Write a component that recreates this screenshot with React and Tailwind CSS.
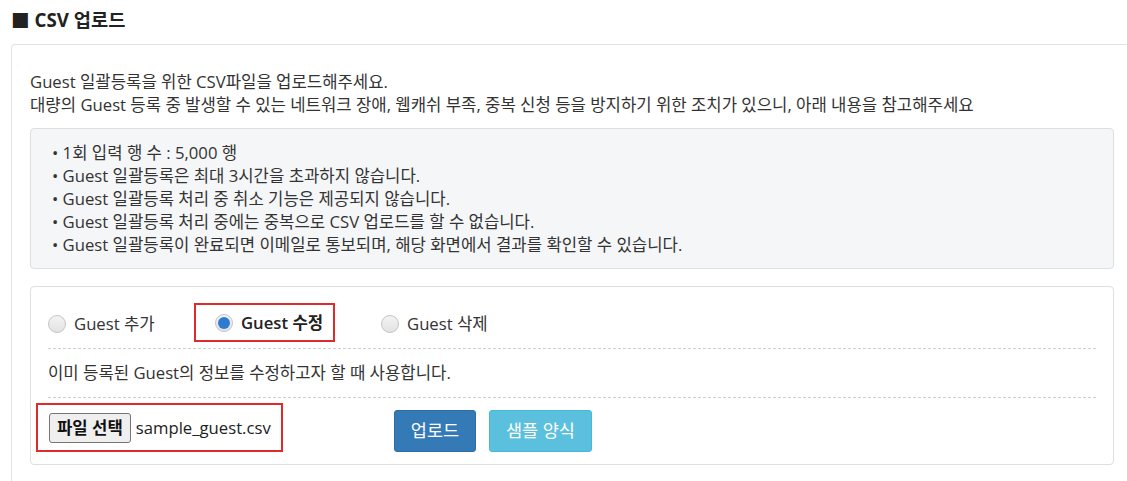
export default function App() {
  const notes = [
    "1회 입력 행 수 : 5,000 행",
    "Guest 일괄등록은 최대 3시간을 초과하지 않습니다.",
    "Guest 일괄등록 처리 중 취소 기능은 제공되지 않습니다.",
    "Guest 일괄등록 처리 중에는 중복으로 CSV 업로드를 할 수 없습니다.",
    "Guest 일괄등록이 완료되면 이메일로 통보되며, 해당 화면에서 결과를 확인할 수 있습니다.",
  ]

  const Radio = ({ checked }) => (
    <span className="w-[18px] h-[18px] shrink-0 rounded-full border border-[#c4c4c4] bg-gradient-to-b from-[#f4f4f4] to-[#e2e2e2] flex items-center justify-center">
      {checked && <span className="w-[12px] h-[12px] rounded-full bg-[#2f7bd1]" />}
    </span>
  )

  return (
    <div className="w-[1127px] h-[481px] bg-white text-[#333] overflow-hidden" style={{ fontFamily: '"Open Sans", "Noto Sans CJK KR", sans-serif' }}>
      {/* title */}
      <div className="h-[44px] pl-[11px] pt-[6px] text-[18.7px] font-bold text-[#222] leading-[28px]">■ CSV 업로드</div>

      {/* outer panel */}
      <div className="ml-[11px] border-l border-t border-[#e3e3e3] rounded-tl-[4px] pl-[18px] pr-[13px] pt-[25px] h-[437px]">
        <p className="text-[16.7px] leading-[23px]">Guest 일괄등록을 위한 CSV파일을 업로드해주세요.</p>
        <p className="text-[16.7px] leading-[23px]">대량의 Guest 등록 중 발생할 수 있는 네트워크 장애, 웹캐쉬 부족, 중복 신청 등을 방지하기 위한 조치가 있으니, 아래 내용을 참고해주세요</p>

        <div className="mt-[12px] h-[141px] bg-[#f5f6f8] border border-[#dedee3] rounded-[4px] pl-[21px] pt-[12px]">
          {notes.map((n) => (
            <div key={n} className="text-[16.7px] leading-[23px]">• {n}</div>
          ))}
        </div>

        <div className="mt-[17px] h-[179px] border border-[#dedee3] rounded-[4px] px-[17px]">
          <div className="h-[61px] pt-[13px] flex items-center">
            <label className="flex items-center gap-[8px] text-[16.7px] w-[146px]">
              <Radio />
              <span>Guest 추가</span>
            </label>
            <label className="flex items-center gap-[8px] text-[16.7px] font-semibold text-[#222] w-[141px] h-[39px] border-2 border-[#e02b2b] pl-[19px] mt-[-4px] pt-[2px]">
              <Radio checked />
              <span>Guest 수정</span>
            </label>
            <label className="flex items-center gap-[8px] text-[16.7px] ml-[46px]">
              <Radio />
              <span>Guest 삭제</span>
            </label>
          </div>
          <div className="border-t border-dashed border-[#cfcfcf]" />
          <p className="h-[48px] flex items-center text-[16.7px]">이미 등록된 Guest의 정보를 수정하고자 할 때 사용합니다.</p>
          <div className="border-t border-dashed border-[#cfcfcf]" />
          <div className="flex items-center mt-[5px]">
            <div className="ml-[-12px] w-[247px] h-[49px] border-2 border-[#e02b2b] flex items-center pl-[11px]">
              <button className="h-[30px] px-[7px] bg-[#efefef] border border-[#767676] rounded-[3px] text-[16.7px] font-bold text-[#111] whitespace-nowrap">파일 선택</button>
              <span className="ml-[5px] text-[16.7px] text-[#222] whitespace-nowrap">sample_guest.csv</span>
            </div>
            <button className="ml-[111px] mt-[6px] h-[42px] w-[82px] bg-[#337ab7] border border-[#2e6da4] rounded-[3px] text-white text-[17.5px]">업로드</button>
            <button className="ml-[13px] mt-[6px] h-[42px] w-[103px] bg-[#5bc0de] border border-[#46b8da] rounded-[3px] text-white text-[17.5px]">샘플 양식</button>
          </div>
        </div>
      </div>
    </div>
  )
}
